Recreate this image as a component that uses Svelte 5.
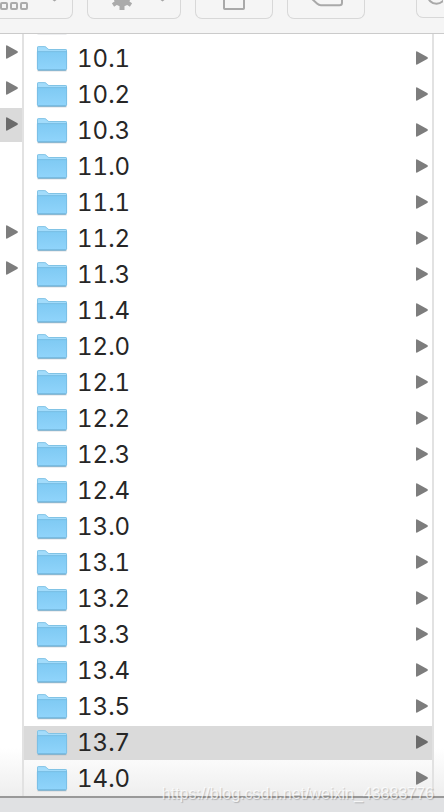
<script>
    const folders = [
        "10.1", "10.2", "10.3", "11.0", "11.1", "11.2", "11.3",
        "11.4", "12.0", "12.1", "12.2", "12.3", "12.4", "13.0",
        "13.1", "13.2", "13.3", "13.4", "13.5", "13.7", "14.0",
    ];
    // rows of the parent column, true when the row can be opened
    const parents = [true, true, true, false, false, true, true];
    let parentSelected = 2;
    let selected = "13.7";
</script>

{#snippet arrow()}
    <svg class="arrow" width="12" height="14" viewBox="0 0 12 14" aria-hidden="true">
        <path d="M0 1.2Q0 0 1.2.5L11.2 6Q12.6 7 11.2 8L1.2 13.5Q0 14 0 12.8Z" fill="currentColor" />
    </svg>
{/snippet}

{#snippet folderIcon()}
    <svg class="folder" width="32" height="28" viewBox="0 0 32 28" aria-hidden="true">
        <defs>
            <linearGradient id="front" x1="0" y1="0" x2="0" y2="1">
                <stop offset="0" stop-color="#7fcaf3" />
                <stop offset="1" stop-color="#90d4fb" />
            </linearGradient>
        </defs>
        <path d="M1.5 26.6H30.5" stroke="#aab3b9" stroke-width="1.4" opacity=".7" />
        <path d="M1 25V3.6Q1 2.2 2.4 2.2H8.6Q9.6 2.2 10.4 3L12 4.7Q12.5 5.1 13.3 5.1H29.6Q31 5.1 31 6.5V25Z" fill="#a3dcfb" />
        <path d="M1.5 8V3.7Q1.5 2.6 2.6 2.6H8.6Q9.4 2.6 10 3.2L11.7 4.9Q12.3 5.5 13.3 5.5H29.4Q30.5 5.5 30.5 6.6V8" fill="none" stroke="#79bde0" stroke-width=".8" />
        <path d="M1.4 7.6H30.6V24.8Q30.6 26 29.4 26H2.6Q1.4 26 1.4 24.8Z" fill="url(#front)" stroke="#72b8de" stroke-width=".8" />
        <path d="M2.2 26H29.8" stroke="#68a9cf" stroke-width=".8" />
    </svg>
{/snippet}

<div class="window">
    <header>
        <button class="first" aria-label="Group items">
            <svg width="73" height="18" viewBox="0 0 73 18">
                <g fill="none" stroke="#ababab" stroke-width="2">
                    <rect x="2" y="3" width="6" height="6" rx="1" />
                    <rect x="12" y="3" width="6" height="6" rx="1" />
                    <rect x="22" y="3" width="6" height="6" rx="1" />
                </g>
                <path d="M53.5 0H57.5L55.5 1.5Z" fill="#a5a5a5" />
            </svg>
        </button>
        <button class="action" aria-label="Action">
            <svg width="92" height="18" viewBox="0 0 92 18">
                <path d="M34 0V10" stroke="#ababab" stroke-width="5" />
                <path d="M34 -1L25 5M34 -1L43 5" stroke="#ababab" stroke-width="4" />
                <path d="M26 0H42Q40.5 6.5 34 6.5Q27.5 6.5 26 0Z" fill="#ababab" />
                <path d="M72.5 0H76.5L74.5 1.5Z" fill="#a5a5a5" />
            </svg>
        </button>
        <button aria-label="New document">
            <svg width="76" height="18" viewBox="0 0 76 18">
                <path d="M28 -2V8.2Q28 9 28.8 9H47.2Q48 9 48 8.2V-2" fill="none" stroke="#a9a9a9" stroke-width="2" />
            </svg>
        </button>
        <button aria-label="Tags">
            <svg width="76" height="18" viewBox="0 0 76 18">
                <path d="M23 -2L29.3 3.8Q30.8 5.2 32.8 5.2H51.5Q54 5.2 54 2.7V-2" fill="none" stroke="#a9a9a9" stroke-width="2" />
            </svg>
        </button>
        <button class="last" aria-label="Search">
            <svg width="26" height="18" viewBox="0 0 26 18">
                <circle cx="19.5" cy="-5" r="8.8" fill="none" stroke="#a9a9a9" stroke-width="2" />
            </svg>
        </button>
    </header>

    <main>
        <div class="parents">
            {#each parents as canOpen, i}
                {#if canOpen}
                    <button class="row" class:selected={i === parentSelected} aria-label="Open folder" on:click={() => (parentSelected = i)}>
                        {@render arrow()}
                    </button>
                {:else}
                    <div class="row"></div>
                {/if}
            {/each}
        </div>
        <div class="folders">
            <div class="cut">{@render folderIcon()}</div>
            {#each folders as name}
                <button class="row" class:selected={name === selected} on:click={() => (selected = name)}>
                    {@render folderIcon()}
                    <span>{name}</span>
                    {@render arrow()}
                </button>
            {/each}
        </div>
        <div class="preview"></div>
    </main>

    <footer></footer>
    <p class="watermark">https://blog.csdn.net/weixin_43883776</p>
</div>

<style>
    :global(body) {
        margin: 0;
    }
    .window {
        position: relative;
        display: flex;
        flex-direction: column;
        height: 100vh;
        overflow: hidden;
        background: #fff;
        font-family: Inter, "Liberation Sans", sans-serif;
    }
    button {
        border: 0;
        padding: 0;
        margin: 0;
        background: none;
        font: inherit;
        color: inherit;
    }
    svg {
        display: block;
        flex: none;
    }

    header {
        display: flex;
        align-items: flex-start;
        gap: 14px;
        flex: none;
        height: 33px;
        background: #f5f5f5;
        border-bottom: 1px solid #cbcbcb;
    }
    header button {
        box-sizing: border-box;
        flex: none;
        width: 78px;
        height: 19px;
        border: 1px solid #d8d8d8;
        border-top: 0;
        border-radius: 0 0 7px 7px;
        overflow: hidden;
    }
    header .first {
        width: 73px;
        border-left: 0;
        border-radius: 0 0 7px 0;
    }
    header .first svg {
        margin-left: -1px;
    }
    header .action {
        width: 94px;
    }
    header .last {
        width: 28px;
        height: 18px;
        margin-left: auto;
        border-right: 0;
        border-radius: 0 0 0 7px;
    }

    main {
        display: flex;
        flex: 1;
        min-height: 0;
        background: linear-gradient(to top, #eee, #fff 48px);
    }
    .parents,
    .folders {
        display: flex;
        flex-direction: column;
        gap: 2px;
        border-right: 2px solid #e2e2e2;
        overflow: hidden;
    }
    .parents {
        width: 22px;
        padding-top: 2px;
    }
    .folders {
        flex: 1;
    }
    .preview {
        width: 10px;
    }
    .row {
        box-sizing: border-box;
        display: flex;
        align-items: center;
        flex: none;
        height: 34px;
        color: #7d7d7d;
    }
    .parents .row {
        padding: 0 4px 2px 6px;
    }
    .folders .row {
        padding: 0 4px 2px 12px;
    }
    .row.selected {
        background: #dadada;
        color: #6b6b6b;
    }
    .row span {
        flex: 1;
        padding: 2px 0 0 9px;
        text-align: left;
        font-size: 24px;
        font-variant-numeric: tabular-nums;
        line-height: 30px;
        color: #262626;
    }
    .cut {
        display: flex;
        align-items: flex-end;
        flex: none;
        height: 6px;
        padding-left: 12px;
        overflow: hidden;
    }
    .cut .folder {
        margin-bottom: 5px;
    }

    footer {
        flex: none;
        height: 14px;
        border-top: 2px solid #999;
        background: #e0e1e3;
    }
    .watermark {
        position: absolute;
        right: 10px;
        bottom: 8px;
        margin: 0;
        font: 16px/20px "Liberation Sans", sans-serif;
        color: rgba(255, 255, 255, 0.75);
        text-shadow: 1px 1px 1px rgba(0, 0, 0, 0.2);
        pointer-events: none;
    }
</style>
